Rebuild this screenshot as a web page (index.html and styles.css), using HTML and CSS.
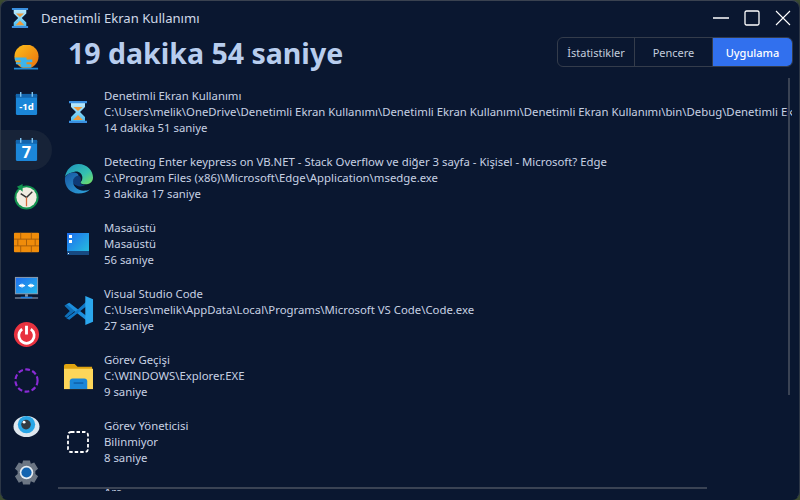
FILE: index.html
```html
<!DOCTYPE html>
<html lang="tr">
<head>
<meta charset="utf-8">
<title>Denetimli Ekran Kullanımı</title>
<link rel="stylesheet" href="styles.css">
</head>
<body>
<div class="window">
  <header class="titlebar">
    <svg class="app-icon" viewBox="0 0 20 24"><defs><linearGradient id="gl" x1="0" y1="0" x2="0" y2="1"><stop offset="0" stop-color="#bfeafb"/><stop offset="1" stop-color="#4fc0f2"/></linearGradient></defs><path fill="url(#gl)" d="M3 3h14v4l-5 5 5 5v4H3v-4l5-5-5-5z"/><path fill="#f09a3a" d="M5.500 7h9L10 11zM5 20l5-5 5 5z"/><path fill="#3a8fe0" d="M1 1h18v2.200H1zM1 20.800h18V23H1z"/></svg>
    <span class="app-title">Denetimli Ekran Kullanımı</span>
    <div class="win-controls">
      <svg class="win-btn" viewBox="0 0 16 16"><path d="M0 8h16" stroke="#fff" stroke-width="1.500"/></svg>
      <svg class="win-btn" viewBox="0 0 16 16"><rect x="1" y="1" width="14" height="14" rx="1.500" fill="none" stroke="#fff" stroke-width="1.300"/></svg>
      <svg class="win-btn" viewBox="0 0 16 16"><path d="M1 1l14 14M15 1L1 15" stroke="#fff" stroke-width="1.100"/></svg>
    </div>
  </header>
  <div class="body">
    <nav class="nav">
      <div class="nav-item"><svg viewBox="0 0 28 28"><defs><linearGradient id="sun" x1="0" y1="0" x2="1" y2="1"><stop offset="0" stop-color="#fdc01c"/><stop offset="1" stop-color="#e8700c"/></linearGradient></defs><circle cx="14" cy="12" r="12.500" fill="url(#sun)"/><path fill="#3fb4ea" d="M2 13h12v2h6v3h-6v2h5v3H8v-3H3v-2h5v-2H2z"/><path fill="#1f8ad6" d="M1 23.500h25v2H1z"/></svg></div>
      <div class="nav-item"><svg viewBox="0 0 28 28"><rect x="3" y="3" width="22" height="22" rx="1.500" fill="#1b86d8"/><rect x="3" y="3" width="22" height="4" fill="#1365ad"/><path d="M8 1v5M20 1v5" stroke="#7fc4f0" stroke-width="1.500"/><text class="cal-small" x="14" y="20" text-anchor="middle">-1d</text></svg></div>
      <div class="nav-item is-active"><svg viewBox="0 0 28 28"><rect x="3" y="3" width="22" height="22" rx="1.500" fill="#1b86d8"/><rect x="3" y="3" width="22" height="4" fill="#1365ad"/><path d="M8 1v5M20 1v5" stroke="#7fc4f0" stroke-width="1.500"/><text class="cal-big" x="14" y="22" text-anchor="middle">7</text></svg></div>
      <div class="nav-item"><svg viewBox="0 0 28 28"><circle cx="14" cy="15" r="12.500" fill="#12924f"/><circle cx="14" cy="15" r="10.500" fill="#f1ebe0"/><path d="M4 4l6-3v8z" fill="#12924f"/><path d="M14 15L8 11M14 15l6-6" stroke="#333" stroke-width="1.500"/><path d="M14 15v9" stroke="#d9683a" stroke-width="1.300"/></svg></div>
      <div class="nav-item"><svg viewBox="0 0 28 28"><rect x="1" y="4" width="26" height="20" rx="1" fill="#f08c0a"/><path d="M1 10.500h26M1 17.500h26M8 4v6.500M19 4v6.500M5 10.500v7M14 10.500v7M23 10.500v7M8 17.500v6.500M19 17.500v6.500" stroke="#a85e08" stroke-width="1"/></svg></div>
      <div class="nav-item"><svg viewBox="0 0 28 28"><defs><linearGradient id="scr" x1="0" y1="0" x2="1" y2="1"><stop offset="0" stop-color="#1f6ff0"/><stop offset="1" stop-color="#23b8e8"/></linearGradient></defs><rect x="2" y="2" width="24" height="18" fill="#8a97a8"/><rect x="3" y="3" width="22" height="16" fill="url(#scr)"/><path d="M6 11h6.500M15.500 11H22" stroke="#fff" stroke-width="1.300"/><path d="M6 11l3-2.200v4.400zM12.500 11l-3-2.200v4.400zM15.500 11l3-2.200v4.400zM22 11l-3-2.200v4.400z" fill="#fff"/><path d="M12.500 20h3v2.500h-3z" fill="#8a97a8"/><path d="M2 23h24v1.500H2z" fill="#6f7c90"/><path d="M8 22.500h12V24H8z" fill="#1f7fe0"/></svg></div>
      <div class="nav-item"><svg viewBox="0 0 28 28"><circle cx="14" cy="14" r="13" fill="#e8323f"/><path d="M9.500 8.500a8 8 0 1 0 9 0" fill="none" stroke="#fff" stroke-width="2.800"/><path d="M14 5v9" stroke="#fff" stroke-width="3"/></svg></div>
      <div class="nav-item"><svg viewBox="0 0 28 28"><circle cx="14" cy="14" r="11.500" fill="none" stroke="#8a2bd6" stroke-width="2.200" stroke-dasharray="5 2.500"/></svg></div>
      <div class="nav-item"><svg viewBox="0 0 28 28"><ellipse cx="14" cy="14" rx="13.500" ry="11" fill="#dfe7ee"/><circle cx="14" cy="12" r="9" fill="#29a6e6"/><circle cx="13.500" cy="12" r="5" fill="#333a42"/><circle cx="11.500" cy="9.500" r="1.500" fill="#fff"/></svg></div>
      <div class="nav-item"><svg viewBox="0 0 28 28"><path fill="#6c7684" d="M10.500 1.500h7l1 3.500 3.500-1.500 4 6.500-2.800 2.500v3l2.800 2.500-4 6.500-3.500-1.500-1 3.500h-7l-1-3.500L6 24.500 2 18l2.800-2.500v-3L2 10l4-6.500L9.500 5z"/><circle cx="14" cy="14" r="7" fill="#e8eef4"/><circle cx="14" cy="14" r="5.300" fill="#1464b0"/></svg></div>
    </nav>
    <main class="main">
      <div class="head">
        <h1 class="total">19 dakika 54 saniye</h1>
        <div class="segments">
          <span class="seg">İstatistikler</span>
          <span class="seg">Pencere</span>
          <span class="seg is-on">Uygulama</span>
        </div>
      </div>
      <div class="list">
        <div class="row">
          <div class="row-icon"><svg class="i-hour" viewBox="0 0 20 24"><defs><linearGradient id="gl2" x1="0" y1="0" x2="0" y2="1"><stop offset="0" stop-color="#bfeafb"/><stop offset="1" stop-color="#4fc0f2"/></linearGradient></defs><path fill="url(#gl2)" d="M3 3h14v4l-5 5 5 5v4H3v-4l5-5-5-5z"/><path fill="#f09a3a" d="M5.500 7h9L10 11zM5 20l5-5 5 5z"/><path fill="#3a8fe0" d="M1 1h18v2.200H1zM1 20.800h18V23H1z"/></svg></div>
          <div class="row-text"><div>Denetimli Ekran Kullanımı</div><div>C:\Users\melik\OneDrive\Denetimli Ekran Kullanımı\Denetimli Ekran Kullanımı\Denetimli Ekran Kullanımı\bin\Debug\Denetimli Ekran Kullanımı.exe</div><div>14 dakika 51 saniye</div></div>
        </div>
        <div class="row">
          <div class="row-icon"><svg class="i-big" viewBox="0 0 32 32"><defs><linearGradient id="eg" x1="0" y1="0" x2="1" y2="1"><stop offset="0" stop-color="#1c8fc0"/><stop offset=".6" stop-color="#35c1b0"/><stop offset="1" stop-color="#7ce05a"/></linearGradient><linearGradient id="eb" x1="0" y1="0" x2="1" y2="1"><stop offset="0" stop-color="#17559f"/><stop offset="1" stop-color="#2ea7e0"/></linearGradient></defs><path fill="url(#eg)" d="M2 15C3 7 9 1 16 1c9 0 15 7 15 14 0 5-4 7-8 7-3 0-5-1-5-2 1-1 2-2 2-5 0-4-4-7-8-6-5 1-9 3-10 6z"/><path fill="#0e3b78" d="M16 13c3 1 3 5 2 7 0 2 2 2.500 5 2.500-3 2.500-9 2.500-12.500-1.500-1-4 1.500-7 5.500-8z"/><path fill="url(#eb)" d="M2 15c2-4 7-6 11-5 2 .5 3 2 3 3-4 1-6 4-5.500 7 .5 5 5.500 9 12.500 8.500 2-.2 3.500-.5 5-1.500-3 3-7 4.500-12 4.500C8 31.500 1 25 2 15z"/></svg></div>
          <div class="row-text"><div>Detecting Enter keypress on VB.NET - Stack Overflow ve diğer 3 sayfa - Kişisel - Microsoft? Edge</div><div>C:\Program Files (x86)\Microsoft\Edge\Application\msedge.exe</div><div>3 dakika 17 saniye</div></div>
        </div>
        <div class="row">
          <div class="row-icon"><svg class="i-desk" viewBox="0 0 22 22"><defs><linearGradient id="dk" x1="0" y1="0" x2="1" y2="1"><stop offset="0" stop-color="#1d6cf0"/><stop offset="1" stop-color="#27c4dc"/></linearGradient></defs><rect width="22" height="22" fill="url(#dk)"/><rect y="18" width="22" height="4" fill="#174a82"/><rect x="2" y="2" width="3" height="3" fill="#fff"/><rect x="2" y="7" width="3" height="3" fill="#fff"/><rect x="1" y="20" width="1" height="1" fill="#fff"/></svg></div>
          <div class="row-text"><div>Masaüstü</div><div>Masaüstü</div><div>56 saniye</div></div>
        </div>
        <div class="row">
          <div class="row-icon"><svg class="i-big" viewBox="0 0 32 32"><path fill="#0f6fb8" d="M1.500 11l2-1.500 9 7-9 7-2-1.500 5.500-5.500z"/><path fill="#1c8fdd" d="M3.500 9.500l3-1.500L30 26l-3 2.500-14-11z"/><path fill="#0f78c8" d="M3.500 24l3 1.500L30 7l-3-3-14 13z"/><path fill="#2ba7ee" d="M23 1l8 3.500v23L23 31z"/></svg></div>
          <div class="row-text"><div>Visual Studio Code</div><div>C:\Users\melik\AppData\Local\Programs\Microsoft VS Code\Code.exe</div><div>27 saniye</div></div>
        </div>
        <div class="row">
          <div class="row-icon"><svg class="i-big" viewBox="0 0 32 28"><path fill="#e0a410" d="M1 3a2 2 0 0 1 2-2h9l3 3h15v4H1z"/><path fill="#fdd65a" d="M1 6h30v21H1z"/><path fill="#1a86d8" d="M7 19a3 3 0 0 1 3-3h12a3 3 0 0 1 3 3v8H7z"/><path fill="#0e5fa8" d="M11 20h10v1.500H11z"/></svg></div>
          <div class="row-text"><div>Görev Geçişi</div><div>C:\WINDOWS\Explorer.EXE</div><div>9 saniye</div></div>
        </div>
        <div class="row">
          <div class="row-icon"><svg class="i-desk" viewBox="0 0 22 22"><rect x="1" y="1" width="20" height="20" rx="3" fill="none" stroke="#fff" stroke-width="1.800" stroke-dasharray="3.500 2"/></svg></div>
          <div class="row-text"><div>Görev Yöneticisi</div><div>Bilinmiyor</div><div>8 saniye</div></div>
        </div>
        <div class="row">
          <div class="row-icon"></div>
          <div class="row-text"><div>Ara</div></div>
        </div>
      </div>
      <div class="vscroll"></div>
      <div class="hscroll"></div>
    </main>
  </div>
</div>
</body>
</html>
```
FILE: styles.css
```css
* { box-sizing: border-box; }
html, body { margin: 0; height: 100%; background: #3a4a30; overflow: hidden; }
.window {
  width: 800px; height: 500px; background: #0a1730; border-radius: 8px;
  border: 1px solid #2c3646; border-top-color: #3a4250; border-bottom-color: #0a1730;
  display: flex; flex-direction: column; overflow: hidden;
  font-family: "Noto Sans", "Open Sans", sans-serif; color: #c9d3e6;
}
.titlebar { height: 33px; flex: none; display: flex; align-items: center; padding-left: 10px; }
.app-icon { width: 18px; height: 22px; }
.app-title { margin-left: 12px; font-size: 13.100px; color: #cfd8e8; }
.win-controls { margin-left: auto; margin-right: 8px; display: flex; gap: 15px; }
.win-btn { width: 16px; height: 16px; display: block; }
.body { flex: 1; display: flex; min-height: 0; }
.nav { width: 51px; flex: none; display: flex; flex-direction: column; padding-top: 1px; }
.nav-item { height: 46px; flex: none; display: flex; align-items: center; justify-content: center; }
.nav-item svg { width: 27px; height: 27px; display: block; }
.nav-item.is-active { background: #172338; border-radius: 0 20px 20px 0; height: 40px; margin: 3px 0; }
.cal-small { font: 700 10px "Noto Sans", sans-serif; fill: #fff; }
.cal-big { font: 700 17px "Noto Sans", sans-serif; fill: #fff; }
.main { flex: 1; min-width: 0; position: relative; display: flex; flex-direction: column; }
.head { height: 36px; flex: none; display: flex; align-items: center; justify-content: space-between; padding: 0 6px 0 16px; }
.total { margin: 2px 0 0; font-size: 28.500px; font-weight: 700; color: #b8cdee; line-height: 1; }
.segments { display: flex; height: 30px; border: 1px solid #343c4b; border-radius: 6px; overflow: hidden; font-size: 11px; }
.seg { display: flex; align-items: center; justify-content: center; color: #c3cddd; width: 78px; border-right: 1px solid #343c4b; }
.seg:first-child { width: 77px; }
.seg.is-on { width: 79px; background: #3170ee; color: #fff; border-right: 0; font-weight: 500; }
.list { flex: 1; min-height: 0; overflow: hidden; padding-top: 18px; margin: 0 7px 8px 0; }
.row { height: 66px; display: flex; align-items: flex-start; }
.row-icon { width: 52px; height: 48px; flex: none; display: flex; align-items: center; justify-content: center; }
.row-text { font-size: 11.350px; line-height: 16px; white-space: nowrap; color: #c7d1e3; }
.i-hour { width: 20px; height: 24px; }
.i-big { width: 31px; height: 31px; }
.i-desk { width: 22px; height: 22px; }
.vscroll { position: absolute; right: 9px; top: 44px; height: 317px; width: 2px; background: #3a4354; }
.hscroll { position: absolute; left: 6px; right: 92px; bottom: 10px; height: 2px; background: #3a4354; }
```
